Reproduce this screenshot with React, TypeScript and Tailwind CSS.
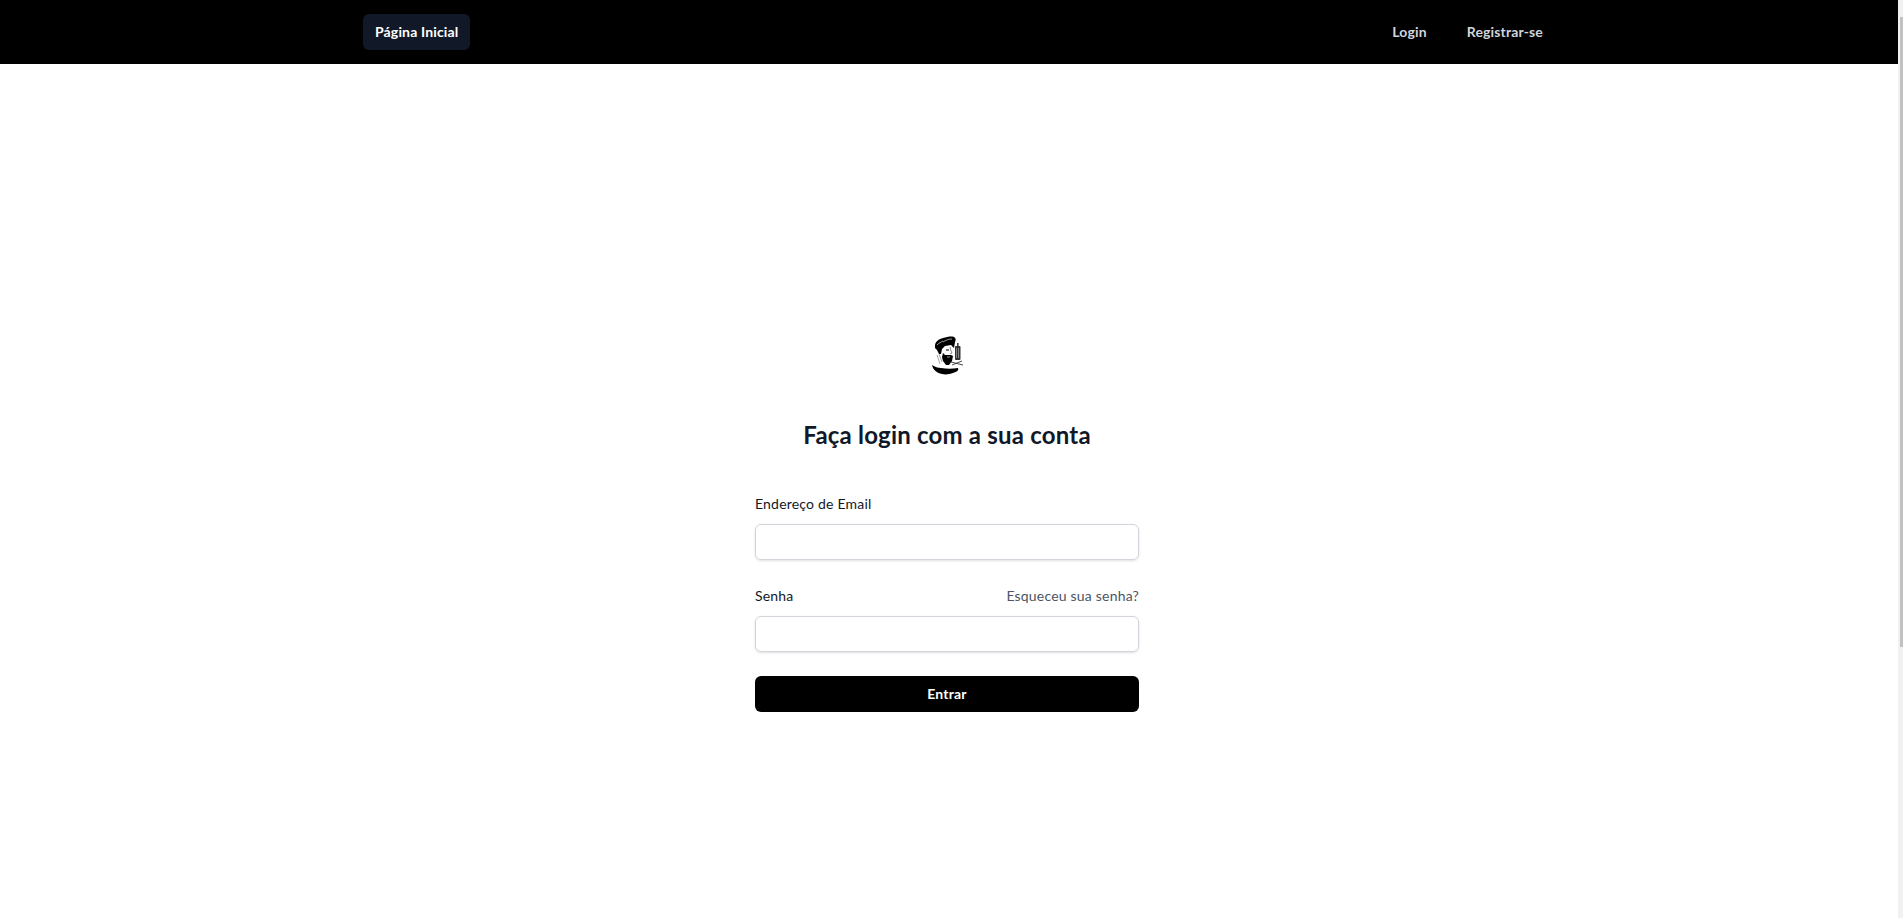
function Logo() {
  return (
    <svg viewBox="0 0 40 40" className="h-10 w-10">
      {/* hair */}
      <path d="M8 9c1-4 4-6 8-7 4-1 8-2 11-1 2 1 2 3 1 5l-1 6-3-3-6 1-3 3-1 5-2 0-2-4-2-2z" fill="#000" />
      <path d="M10 9c2-2 4-3 6-4M16 6c3-2 6-3 9-3" fill="none" stroke="#fff" strokeWidth="0.6" />
      {/* neck lines */}
      <path d="M10 19l3 9M12 18l3 8" fill="none" stroke="#666" strokeWidth="0.6" />
      {/* eye and nose */}
      <path d="M19 14h3" stroke="#000" strokeWidth="1" />
      <path d="M23 11l1 4 1 2-2 1" fill="none" stroke="#444" strokeWidth="0.6" />
      {/* beard */}
      <path d="M16 17l2 2h3l3 0 2 1-1 5-3 4-3 0-3-4-1-4z" fill="#000" />
      <path d="M20 21h3" stroke="#fff" strokeWidth="0.6" />
      {/* clipper */}
      <rect x="28" y="10" width="5.5" height="14" rx="1" fill="#333" />
      <path d="M29.5 12v10M31.5 12v10" stroke="#bbb" strokeWidth="0.6" />
      <rect x="30" y="7" width="1.6" height="3" fill="#444" />
      {/* scissors */}
      <path d="M24 26l12 3M25 29l10-4" fill="none" stroke="#333" strokeWidth="0.9" />
      {/* banner */}
      <path d="M5 29c3 2 6 3 9 3 6 1 11 1 17 0 1 2-1 4-5 5-3 1-7 2-11 1-5-1-9-4-10-9z" fill="#000" />
    </svg>
  );
}

export default function App() {
  return (
    <div className="flex h-screen overflow-hidden bg-white font-['Lato',sans-serif] text-sm tracking-[0.2px]">
      <div className="flex-1">
        <nav className="h-16 bg-black pr-1">
          <div className="mx-auto flex h-16 max-w-7xl items-center justify-between px-8 tracking-[0.15px]">
            <div className="ml-6">
              <a href="#" className="block rounded-md bg-[#111827] px-3 py-2 font-bold leading-5 text-white">Página Inicial</a>
            </div>
            <div className="flex gap-4">
              <a href="#" className="block rounded-md px-3 py-2 font-bold leading-5 text-[#d1d5db]">Login</a>
              <a href="#" className="block rounded-md px-3 py-2 font-bold leading-5 text-[#d1d5db]">Registrar-se</a>
            </div>
          </div>
        </nav>
        <main className="flex flex-col items-center pr-1 pt-[272px]">
          <Logo />
          <h2 className="mb-[39px] mt-[41px] text-center text-2xl font-bold leading-9 text-[#111827]">Faça login com a sua conta</h2>
          <form className="w-[384px]">
            <label className="block leading-6 text-[#111827]">Endereço de Email</label>
            <input type="email" className="mt-2 block h-9 w-full rounded-md border border-[#d1d5db] shadow-sm" />
            <div className="mt-6 flex items-center justify-between">
              <label className="block leading-6 text-[#111827]">Senha</label>
              <a href="#" className="leading-6 text-[#4b5563]">Esqueceu sua senha?</a>
            </div>
            <input type="password" className="mt-2 block h-9 w-full rounded-md border border-[#d1d5db] shadow-sm" />
            <button type="button" className="mt-6 flex h-9 w-full items-center justify-center rounded-md bg-black font-bold leading-6 text-white">Entrar</button>
          </form>
        </main>
      </div>
      <div className="w-[5px] bg-[#f1f1f1]">
        <div className="ml-[2px] mt-[17px] h-[630px] w-[3px] bg-[#c1c1c1]" />
      </div>
    </div>
  );
}
